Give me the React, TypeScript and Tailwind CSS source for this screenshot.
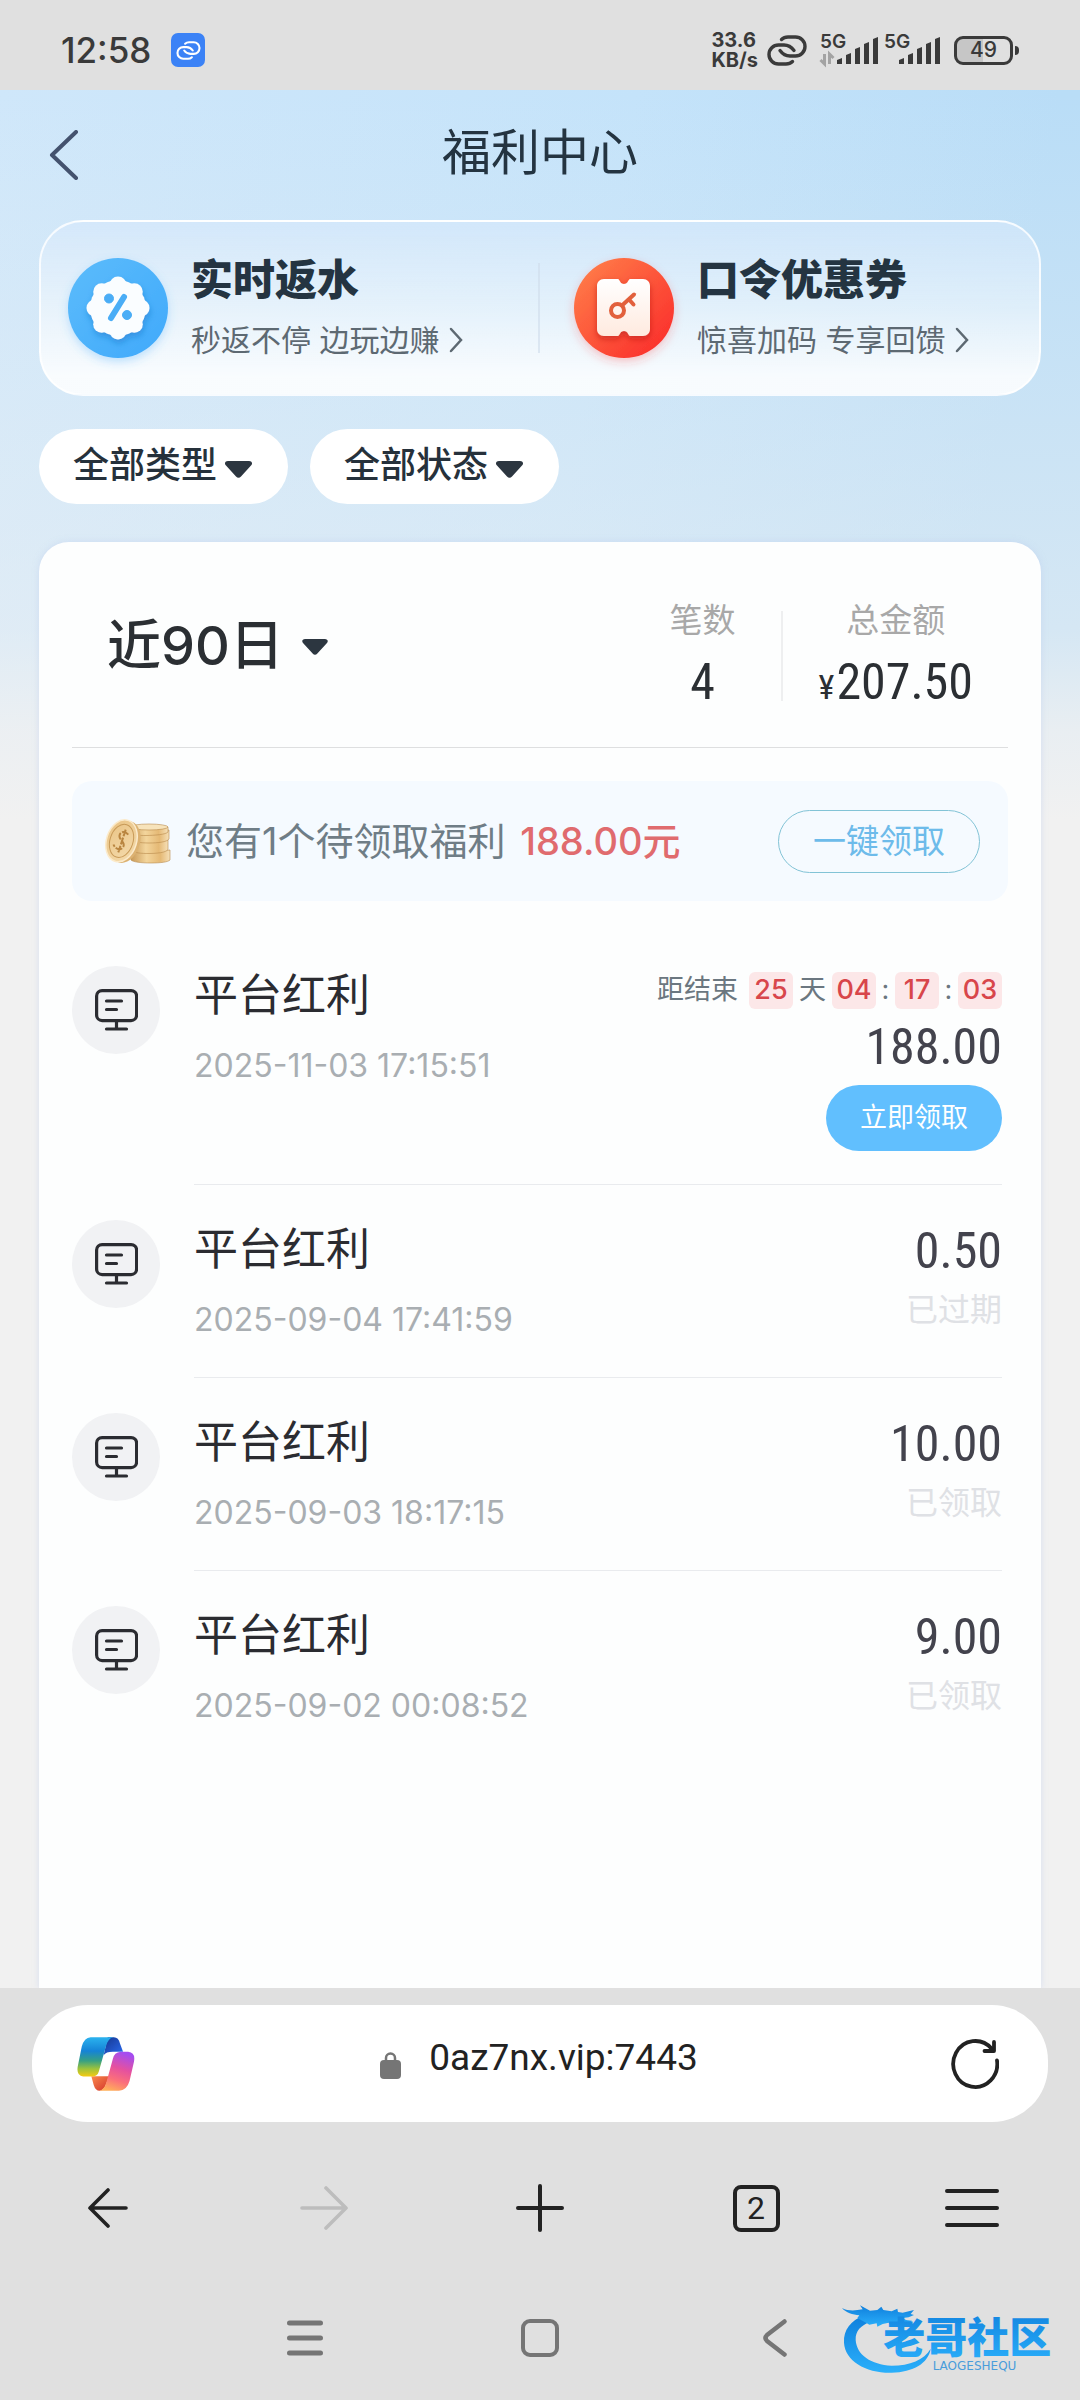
import React from 'react';

const NUM = "font-['Roboto_Condensed','Liberation_Sans_Narrow','Roboto','Liberation_Sans',sans-serif]";

type Bonus = {
  time: string;
  amount: string;
  status?: string;
  countdown?: string[];
};

const records: Bonus[] = [
  { time: '2025-11-03 17:15:51', amount: '188.00', countdown: ['25', '04', '17', '03'] },
  { time: '2025-09-04 17:41:59', amount: '0.50', status: '已过期' },
  { time: '2025-09-03 18:17:15', amount: '10.00', status: '已领取' },
  { time: '2025-09-02 00:08:52', amount: '9.00', status: '已领取' },
];

function ChainIcon({ className }: { className: string }) {
  return (
    <svg viewBox="0 0 40 31" fill="none" stroke="currentColor" strokeWidth="3.4" strokeLinecap="round" className={className} aria-hidden="true">
      <path d="M14.500 4.500Q17 2 21 2H28.500A9.500 9.500 0 0 1 28.500 21H23Q17 21 13 15.500" />
      <path d="M25.500 26.500Q23 29 19 29H11.500A9.500 9.500 0 0 1 11.500 10H17Q23 10 27 15.500" />
    </svg>
  );
}

function Signal({ x, data }: { x: number; data?: boolean }) {
  const heights = [6, 11, 17, 22, 27];
  return (
    <svg viewBox="0 0 60 34" className="h-[34px] w-[60px] overflow-visible" aria-hidden="true">
      <text x="0" y="15" fontSize="19" fontWeight="600" fill="#3a3a3a" fontFamily="Inter, sans-serif">5G</text>
      {heights.map((h, i) => (
        <path key={h} d={`M${x + i * 9} ${31 - h + 2}l5 -2v${h}h-5z`} fill="#3a3a3a" />
      ))}
      {data && (
        <path d="M4.500 21v10l-4-4M9.500 31V21l4 4" fill="none" stroke="#a3a3a3" strokeWidth="3" />
      )}
    </svg>
  );
}

function StatusBar() {
  return (
    <div className="flex h-[90px] items-center justify-between bg-[#e0e0e0] pt-[10px] pr-[61px] pl-[61px] text-[#3a3a3a]">
      <div className="flex items-center gap-5">
        <span className="text-[35px] leading-10 font-medium">12:58</span>
        <span className="flex size-[34px] items-center justify-center rounded-[7px] bg-[#3b82f6] text-white">
          <ChainIcon className="h-[19px] w-[25px]" />
        </span>
      </div>
      <div className="flex items-center">
        <span className="mr-[9px] flex flex-col text-[20px] leading-5 font-bold">
          <span>33.6</span>
          <span>KB/s</span>
        </span>
        <ChainIcon className="mr-[13px] h-[31px] w-10" />
        <Signal x={17} data />
        <span className="w-1" />
        <Signal x={15} />
        <span className="ml-[10px] flex items-center gap-[2px]">
          <span className="flex h-[29px] w-[59px] items-center justify-center rounded-[9px] border-[3px] border-[#3a3a3a] bg-linear-to-r from-[#c6c6c6] from-50% to-[#e0e0e0] to-50% text-[21px] leading-5 font-medium">49</span>
          <span className="h-[9px] w-1 rounded-r-sm bg-[#3a3a3a]" />
        </span>
      </div>
    </div>
  );
}

function DiscountIcon() {
  const bumps = Array.from({ length: 8 }, (_, i) => (i * Math.PI) / 4);
  return (
    <svg viewBox="0 0 100 100" className="size-[100px] shrink-0 overflow-visible" aria-hidden="true">
      <defs>
        <linearGradient id="blueDisc" x1="0" y1="0" x2="1" y2="1">
          <stop offset="0" stopColor="#5cbcfb" />
          <stop offset="1" stopColor="#3fa9fb" />
        </linearGradient>
        <filter id="soft" x="-30%" y="-30%" width="160%" height="170%">
          <feDropShadow dx="1" dy="4" stdDeviation="3" floodColor="#1672c4" floodOpacity=".45" />
        </filter>
        <filter id="halo" x="-30%" y="-30%" width="160%" height="170%">
          <feDropShadow dx="0" dy="4" stdDeviation="5" floodColor="#3fa9fb" floodOpacity=".3" />
        </filter>
      </defs>
      <circle cx="50" cy="50" r="50" fill="url(#blueDisc)" filter="url(#halo)" />
      <g filter="url(#soft)" fill="#fafdff">
        <circle cx="50" cy="50" r="28" />
        {bumps.map((a) => (
          <circle key={a} cx={50 + 23 * Math.cos(a)} cy={50 + 23 * Math.sin(a)} r="8.500" />
        ))}
      </g>
      <g fill="#4aadf6" stroke="#4aadf6">
        <circle cx="41" cy="40.500" r="4.500" />
        <circle cx="59" cy="57" r="4.500" />
        <path d="M56 39L43 60" strokeWidth="6" strokeLinecap="round" />
      </g>
    </svg>
  );
}

function CouponIcon() {
  return (
    <svg viewBox="0 0 100 100" className="size-[100px] shrink-0 overflow-visible" aria-hidden="true">
      <defs>
        <linearGradient id="redDisc" x1="0.100" y1="0.100" x2="0.900" y2="0.900">
          <stop offset="0" stopColor="#ff7a48" />
          <stop offset="1" stopColor="#fb302c" />
        </linearGradient>
        <linearGradient id="ticket" x1="0" y1="0" x2="0" y2="1">
          <stop offset="0" stopColor="#fff" />
          <stop offset="1" stopColor="#ffeadf" />
        </linearGradient>
        <filter id="redSoft" x="-30%" y="-30%" width="160%" height="170%">
          <feDropShadow dx="0" dy="3" stdDeviation="3" floodColor="#a80f08" floodOpacity=".5" />
        </filter>
        <filter id="redHalo" x="-30%" y="-30%" width="160%" height="170%">
          <feDropShadow dx="0" dy="4" stdDeviation="5" floodColor="#fb302c" floodOpacity=".25" />
        </filter>
      </defs>
      <circle cx="50" cy="50" r="50" fill="url(#redDisc)" filter="url(#redHalo)" />
      <path
        filter="url(#redSoft)"
        fill="url(#ticket)"
        d="M30 21h14c1.500 0 2 5 6 5s4.500-5 6-5h13c4 0 7 3 7 7v43c0 4-3 7-7 7H56c-1.500 0-2-5-6-5s-4.500 5-6 5H30c-4 0-7-3-7-7V28c0-4 3-7 7-7z"
      />
      <g fill="none" stroke="#e2603c" strokeLinecap="round">
        <circle cx="43.500" cy="52.500" r="6.500" strokeWidth="4" />
        <path d="M48.500 47L60 36.500" strokeWidth="4" />
        <path d="M55.500 42l4 4.500" strokeWidth="4" />
      </g>
    </svg>
  );
}

function Entry({ icon, title, sub }: { icon: React.ReactNode; title: string; sub: string }) {
  return (
    <a href="#" className="flex items-center gap-[23px]">
      {icon}
      <span className="flex flex-col gap-[6px]">
        <span className="text-[42px] leading-[58px] font-black text-[#243441]">{title}</span>
        <span className="flex items-center gap-[10px] text-[30px] leading-[50px] whitespace-nowrap text-[#5d6972]">
          {sub}
          <svg viewBox="0 0 14 26" className="h-[26px] w-[14px]" fill="none" stroke="currentColor" strokeWidth="2.500" strokeLinecap="round" aria-hidden="true">
            <path d="M2 2l10 11L2 24" />
          </svg>
        </span>
      </span>
    </a>
  );
}

function Caret({ className }: { className: string }) {
  return (
    <svg viewBox="0 0 27 17" className={className} aria-hidden="true">
      <path d="M3 0h21c3 0 4 2.500 2 4.500L16 15.500c-1.500 1.800-3.500 1.800-5 0L1 4.500C-1 2.500 0 0 3 0z" fill="#2c3640" />
    </svg>
  );
}

function FilterPill({ label, options }: { label: string; options: string[] }) {
  return (
    <div className="relative">
      <select aria-label={label} className="h-[75px] appearance-none rounded-full bg-white pr-[70px] pb-1 pl-[34px] text-[36px] font-medium text-[#26313b] outline-none">
        {options.map((o) => (
          <option key={o}>{o}</option>
        ))}
      </select>
      <Caret className="pointer-events-none absolute top-8 right-9 h-[17px] w-[27px]" />
    </div>
  );
}

function Coins() {
  return (
    <svg viewBox="0 0 67 46" className="h-[46px] w-[67px] shrink-0" aria-hidden="true">
      <defs>
        <linearGradient id="coinSide" x1="0" y1="0" x2="1" y2="0">
          <stop offset="0" stopColor="#c99a58" />
          <stop offset=".4" stopColor="#f3d59c" />
          <stop offset=".75" stopColor="#e5b975" />
          <stop offset="1" stopColor="#f6e0b8" />
        </linearGradient>
        <linearGradient id="coinFace" x1="0" y1="0" x2="1" y2="1">
          <stop offset="0" stopColor="#e9c283" />
          <stop offset="1" stopColor="#f5dcae" />
        </linearGradient>
      </defs>
      <g fill="url(#coinSide)" stroke="#b98a4c" strokeWidth=".6">
        <path d="M27 34v8c2 2 10 3 20 3s17-1 19-3V32z" />
        <path d="M27 23v9c3 3 10 3.500 18 3.500s17-1 19-4V22z" />
        <path d="M27 14v7c3 3 9 4 18 4s18-1 20-4v-9z" />
        <path d="M26 9v5c3 3 8 3.500 16 3.500S62 16.500 64 14V9z" />
        <ellipse cx="45" cy="9" rx="19" ry="3" fill="#f7e3bb" />
      </g>
      <g transform="rotate(18 18 23)">
        <ellipse cx="21" cy="23" rx="15" ry="21.500" fill="#dcb272" />
        <ellipse cx="17.500" cy="23" rx="15" ry="21.500" fill="url(#coinFace)" stroke="#fbeacb" strokeWidth="1.500" />
        <ellipse cx="17.500" cy="23" rx="11.500" ry="17" fill="none" stroke="#c89a58" strokeWidth="1" />
        <path d="M22 15c-5-3-9 0-8 4s8 4 7 9-7 5-10 1M18 11v24" fill="none" stroke="#b98540" strokeWidth="2" strokeDasharray="7 1.500" />
      </g>
    </svg>
  );
}

function BoardIcon() {
  return (
    <svg viewBox="0 0 43 42" className="h-[42px] w-[43px]" fill="none" stroke="#2b2c31" strokeWidth="3.200" strokeLinecap="round" aria-hidden="true">
      <rect x="1.600" y="1.600" width="40" height="30" rx="5.500" />
      <path d="M11.500 12h15M11.500 20.500h10M21.500 32v7.500M11.500 40h20" />
    </svg>
  );
}

function Digits({ value }: { value: string }) {
  return (
    <span className="flex h-[37px] w-[44px] items-center justify-center rounded-md bg-[#fce7e8] text-[27px] font-medium text-[#d8464b]">
      {value}
    </span>
  );
}

function BonusRow({ record }: { record: Bonus }) {
  const { time, amount, status, countdown } = record;
  return (
    <li className="group flex gap-[34px] pr-[6px]">
      <span className="mt-[35px] flex size-[88px] shrink-0 items-center justify-center rounded-full bg-[#f1f2f4]">
        <BoardIcon />
      </span>
      <div className="flex flex-1 justify-between border-b border-[#e9ebee] group-last:border-transparent">
        <div className="pt-[34px] pb-[37px]">
          <h2 className="text-[44px] leading-[60px] text-[#2b2c31]">平台红利</h2>
          <time className="mt-[21px] block text-[32px] leading-10 text-[#a9aeb2]">{time}</time>
        </div>
        <div className="flex flex-col items-end pt-9 pb-[33px]">
          {countdown && (
            <div className="mb-1 flex h-[46px] items-center text-[27px] text-[#6b7780]">
              <span className="mr-[11px]">距结束</span>
              <Digits value={countdown[0]} />
              <span className="mx-[6px]">天</span>
              <Digits value={countdown[1]} />
              <span className="w-[19px] text-center">:</span>
              <Digits value={countdown[2]} />
              <span className="w-[19px] text-center">:</span>
              <Digits value={countdown[3]} />
            </div>
          )}
          <span className={`${NUM} text-[50px] leading-[60px] text-[#43434d]`}>{amount}</span>
          {status && <span className="mt-[9px] text-[32px] leading-10 text-[#dfe1e5]">{status}</span>}
          {countdown && (
            <button type="button" className="mt-2 h-[66px] rounded-full bg-[#61bffe] px-[34px] text-[27px] text-white">
              立即领取
            </button>
          )}
        </div>
      </div>
    </li>
  );
}

function CopilotLogo() {
  return (
    <svg viewBox="222 230 170 160" preserveAspectRatio="none" className="h-[54px] w-[58px]" aria-hidden="true">
      <defs>
        <linearGradient id="cpLeft" x1="0" y1="0" x2="0" y2="1">
          <stop offset="0" stopColor="#2bb2ee" />
          <stop offset=".35" stopColor="#1583d6" />
          <stop offset=".6" stopColor="#37a083" />
          <stop offset=".8" stopColor="#9cc23c" />
          <stop offset="1" stopColor="#f5cb12" />
        </linearGradient>
        <linearGradient id="cpFold" x1="0" y1="0" x2="1" y2="1">
          <stop offset="0" stopColor="#16368f" />
          <stop offset="1" stopColor="#2a6bf0" />
        </linearGradient>
        <linearGradient id="cpRight" x1=".6" y1="0" x2=".3" y2="1">
          <stop offset="0" stopColor="#a44cf0" />
          <stop offset=".4" stopColor="#e5519f" />
          <stop offset=".7" stopColor="#fb6f7b" />
          <stop offset="1" stopColor="#ffb05a" />
        </linearGradient>
        <linearGradient id="cpTail" x1="0" y1="0" x2="1" y2="1">
          <stop offset="0" stopColor="#fb8a4c" />
          <stop offset="1" stopColor="#d2342c" />
        </linearGradient>
      </defs>
      <path d="M312 231h18q14 0 18 18l9 25h-30q-20 0-27 10z" fill="url(#cpFold)" />
      <path d="M264 346h52l-8 22q-7 21-20 21-12 0-17-17z" fill="url(#cpTail)" />
      <path d="M262 231h66q-16 4-22 29l-20 72q-4 15-20 15h-26q-20-2-16-29l12-60q7-25 26-27z" fill="url(#cpLeft)" />
      <path d="M350 274h22q22 2 17 29l-13 57q-8 28-31 29h-57q14-3 20-24l19-70q4-19 23-21z" fill="url(#cpRight)" />
    </svg>
  );
}

function CommunityMark() {
  return (
    <svg viewBox="0 0 780 300" className="pointer-events-none absolute right-0 bottom-[10px] h-[100px] w-[260px]" role="img" aria-label="老哥社区">
      <defs>
        <linearGradient id="mark" x1="0" y1="0" x2="0" y2="1">
          <stop offset="0" stopColor="#0f7fdc" />
          <stop offset="1" stopColor="#2bb0fb" />
        </linearGradient>
      </defs>
      <g fill="url(#mark)">
        <path d="M132 76C92 92 70 120 72 158c3 56 68 92 143 90 65-2 110-28 117-72-20 34-62 51-117 51-62-3-105-32-108-77-1-26 14-44 48-56z" />
        <path d="M66 54C85 64 105 62 128 58L120 46L150 62L172 60L184 50L190 60L215 64L232 56L234 66L248 68L282 60L272 72L282 75L266 82L248 84L258 90L276 92L270 100L245 96L225 98L212 106L206 98L188 102L172 110L170 100L148 104L138 98L112 84L118 76C98 74 78 68 66 54Z" />
      </g>
      <text x="190" y="190" fontSize="126" fontWeight="900" fill="url(#mark)" fontFamily="'Noto Sans CJK SC', sans-serif">老哥社区</text>
      <text x="338" y="240" fontSize="36" fill="#4a9ddb" fontFamily="'DejaVu Sans', sans-serif">LAOGESHEQU</text>
    </svg>
  );
}

function BrowserBar() {
  return (
    <footer className="relative bg-[#e0e0e0] pt-[17px] pb-[18px] text-[#222]">
      <form className="mx-8 flex h-[117px] items-center justify-between rounded-[56px] bg-white pr-[49px] pl-[45px]">
        <button type="button" aria-label="Copilot"><CopilotLogo /></button>
        <label className="mr-2 flex items-center gap-7">
          <svg viewBox="0 0 21 27" className="mt-1 h-[27px] w-[21px]" role="img" aria-label="安全连接">
            <path d="M6 10V6a4.500 4.500 0 019 0v4" fill="none" stroke="#757575" strokeWidth="2.500" />
            <rect y="8" width="21" height="19" rx="4" fill="#757575" />
          </svg>
          <input aria-label="网址" defaultValue="0az7nx.vip:7443" className="mb-3 field-sizing-content bg-transparent font-['Roboto',sans-serif] text-[37px] leading-[50px] outline-none" />
        </label>
        <button type="button" aria-label="刷新">
          <svg viewBox="0 0 48 50" className="h-[50px] w-12" fill="none" stroke="currentColor" strokeWidth="3.800" strokeLinecap="round" strokeLinejoin="round" aria-hidden="true">
            <path d="M46 21.500a22 23 0 11-5.500-12" />
            <path d="M43 3v9h-9.500" />
          </svg>
        </button>
      </form>
      <nav aria-label="浏览器" className="grid h-[172px] grid-cols-5 place-items-center">
        <button type="button" aria-label="后退">
          <svg viewBox="0 0 40 40" className="size-10" fill="none" stroke="currentColor" strokeWidth="3.600" strokeLinecap="round" strokeLinejoin="round"><path d="M38 20H2M20 2L2 20l18 18" /></svg>
        </button>
        <button type="button" aria-label="前进" className="text-[#bdbdbd]">
          <svg viewBox="0 0 48 44" className="h-11 w-12" fill="none" stroke="currentColor" strokeWidth="3.600" strokeLinecap="round" strokeLinejoin="round"><path d="M2 22h44M26 2l20 20-20 20" /></svg>
        </button>
        <button type="button" aria-label="新建标签页">
          <svg viewBox="0 0 48 48" className="size-12" fill="none" stroke="currentColor" strokeWidth="4" strokeLinecap="round"><path d="M2 24h44M24 2v44" /></svg>
        </button>
        <button type="button" aria-label="标签页" className="flex size-[47px] items-center justify-center rounded-lg border-4 border-[#222] font-['Roboto',sans-serif] text-[32px] leading-none">2</button>
        <button type="button" aria-label="菜单">
          <svg viewBox="0 0 54 40" className="h-10 w-[54px]" fill="none" stroke="currentColor" strokeWidth="4" strokeLinecap="round"><path d="M2 3h50M2 20h50M2 37h50" /></svg>
        </button>
      </nav>
      <nav aria-label="系统" className="flex h-[88px] items-center justify-center gap-[197px] text-[#757575]">
        <button type="button" aria-label="最近任务">
          <svg viewBox="0 0 38 36" className="h-9 w-[38px]" fill="none" stroke="currentColor" strokeWidth="5" strokeLinecap="round"><path d="M3.500 3h31M3.500 18h31M3.500 33h31" /></svg>
        </button>
        <button type="button" aria-label="主屏幕" className="size-[38px] rounded-[9px] border-4 border-[#757575]" />
        <button type="button" aria-label="返回" className="flex w-[38px] justify-center">
          <svg viewBox="0 0 24 38" className="h-[38px] w-6" fill="none" stroke="currentColor" strokeWidth="4.500" strokeLinecap="round" strokeLinejoin="round"><path d="M21.500 2.500L4 16q-3 3 0 6l17.500 13.500" /></svg>
        </button>
      </nav>
      <CommunityMark />
    </footer>
  );
}

export default function App() {
  return (
    <div className="flex min-h-screen flex-col bg-[#f1f1f1] font-['Inter','Noto_Sans_CJK_SC',sans-serif]" lang="zh-CN">
      <StatusBar />
      <main className="flex flex-1 flex-col bg-[linear-gradient(to_bottom,rgba(241,241,241,0)_0,rgba(241,241,241,0.3)_330px,rgba(241,241,241,0.5)_540px,rgba(241,241,241,0.85)_640px,#f1f1f1_730px),linear-gradient(100deg,#cfe7fa_0,#c4e3fa_45%,#b9ddf7_75%)] px-[39px]">
        <header className="grid h-[130px] grid-cols-[1fr_auto_1fr] items-center">
          <button type="button" aria-label="返回" className="ml-[10px] justify-self-start">
            <svg viewBox="0 0 30 50" className="h-[50px] w-[30px]" fill="none" stroke="#44526e" strokeWidth="4" strokeLinecap="round" strokeLinejoin="round" aria-hidden="true">
              <path d="M27 2L3 25l24 23" />
            </svg>
          </button>
          <h1 className="pb-1 text-[49px] leading-[70px] text-[#243441]">福利中心</h1>
        </header>

        <section className="grid h-[176px] grid-cols-2 items-center rounded-[44px] border-2 border-white/80 bg-linear-to-b from-[#d6e8fb]/60 from-0% via-white/45 via-50% to-white/85 to-90%">
          <div className="flex items-center justify-between pl-[27px]">
            <Entry icon={<DiscountIcon />} title="实时返水" sub="秒返不停 边玩边赚" />
            <span className="h-[90px] w-[2px] bg-[#cfdceb]/60" />
          </div>
          <div className="pl-[34px]">
            <Entry icon={<CouponIcon />} title="口令优惠券" sub="惊喜加码 专享回馈" />
          </div>
        </section>

        <div className="mt-[33px] flex gap-[22px]">
          <FilterPill label="类型" options={['全部类型', '平台红利']} />
          <FilterPill label="状态" options={['全部状态', '已领取', '已过期']} />
        </div>

        <section className="mt-[38px] flex-1 rounded-t-[30px] bg-[#fdfefe] px-[33px] shadow-[0_0_6px_rgba(190,205,240,0.5)]">
          <div className="flex items-start justify-between border-b border-[#dedfe0] pt-[58px] pr-[35px] pb-[35px] pl-[35px]">
            <div className="relative">
              <select aria-label="时间范围" className="h-[90px] appearance-none bg-transparent pr-11 text-[54px] font-medium text-[#2b2f33] outline-none">
                <option>近90日</option>
                <option>近30日</option>
                <option>近7日</option>
              </select>
              <Caret className="pointer-events-none absolute top-[39px] right-0 h-4 w-[26px]" />
            </div>
            <div className="flex items-center text-center">
              <dl className="pr-[45px]">
                <dt className="text-[33px] leading-10 text-[#a8a8a8]">笔数</dt>
                <dd className={`${NUM} mt-3 text-[50px] leading-[60px] text-[#2b2f33]`}>4</dd>
              </dl>
              <span className="h-[90px] w-[2px] bg-[#eeeff0]" />
              <dl className="pl-9">
                <dt className="text-[33px] leading-10 text-[#a8a8a8]">总金额</dt>
                <dd className={`${NUM} mt-3 text-[50px] leading-[60px] text-[#2b2f33]`}>
                  <span className="mr-[2px] text-[34px] leading-none">¥</span>207.50
                </dd>
              </dl>
            </div>
          </div>

          <div className="mt-[33px] flex h-[120px] items-center rounded-[20px] bg-[#f5faff] pr-7 pl-8">
            <Coins />
            <p className="ml-[15px] flex-1 text-[38px] leading-[60px] text-[#6f7d86]">
              您有1个待领取福利 <span className="ml-1 font-medium text-[#e06b6e]">188.00元</span>
            </p>
            <button type="button" className="h-[63px] rounded-full border border-[#82c3d6] px-[34px] text-[33px] leading-none text-[#6dbbea]">
              一键领取
            </button>
          </div>

          <ul className="mt-[30px]">
            {records.map((r) => (
              <BonusRow key={r.time} record={r} />
            ))}
          </ul>
        </section>
      </main>
      <BrowserBar />
    </div>
  );
}
